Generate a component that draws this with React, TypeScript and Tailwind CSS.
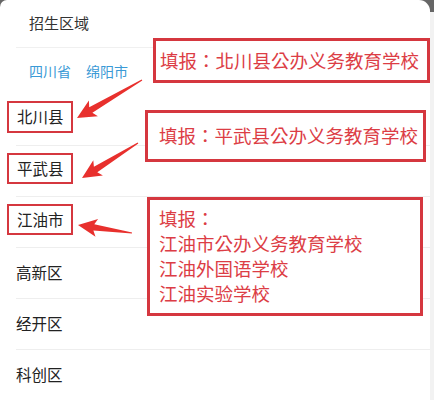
import React from "react";

const font = { fontFamily: '"Noto Sans CJK SC", "Noto Sans", sans-serif' };
const noteFont = { fontFamily: '"Noto Sans CJK TC", "Noto Sans CJK SC", sans-serif' };

type Pt = [number, number];

// tapered annotation arrow: thin at tail, wide head at tip
function arrowPoints(tail: Pt, tip: Pt) {
    const dx = tip[0] - tail[0];
    const dy = tip[1] - tail[1];
    const len = Math.hypot(dx, dy);
    const ux = dx / len;
    const uy = dy / len;
    const nx = -uy;
    const ny = ux;
    const headLen = 19;
    const headHalf = 9;
    const neckHalf = 3.2;
    const bx = tip[0] - ux * headLen;
    const by = tip[1] - uy * headLen;
    const pts: Pt[] = [
        [tail[0] + nx * 0.6, tail[1] + ny * 0.6],
        [bx + ux * 3 + nx * neckHalf, by + uy * 3 + ny * neckHalf],
        [bx + nx * headHalf, by + ny * headHalf],
        tip,
        [bx - nx * headHalf, by - ny * headHalf],
        [bx + ux * 3 - nx * neckHalf, by + uy * 3 - ny * neckHalf],
        [tail[0] - nx * 0.6, tail[1] - ny * 0.6],
    ];
    return pts.map((p) => `${p[0].toFixed(1)},${p[1].toFixed(1)}`).join(" ");
}

const rows = [
    { name: "北川县", marked: true },
    { name: "平武县", marked: true },
    { name: "江油市", marked: true },
    { name: "高新区", marked: false },
    { name: "经开区", marked: false },
    { name: "科创区", marked: false },
];

export default function App() {
    return (
        <div
            className="relative w-[434px] h-[400px] overflow-hidden bg-[linear-gradient(#666_0px,#666_12px,#f2f2f2_12px)]"
            style={font}
        >
            <div className="w-[430px] h-full bg-white rounded-tl-[7px] rounded-tr-[11px]">
                <div className="pl-[29px]">
                    <div className="h-[47px] flex items-center text-[15px] text-[#333]">招生区域</div>
                    <div className="-ml-[13px] border-t border-[#f0f0f0]" />
                    <div className="h-[46px] flex items-center gap-[15px] text-[14px] text-[#3a9ad6]">
                        <span>四川省</span>
                        <span>绵阳市</span>
                    </div>
                </div>
                <div className="pl-[16px]">
                    {rows.map((r, i) => (
                        <div
                            key={r.name}
                            className={`h-[51px] flex items-center text-[15.5px] text-[#222] ${i > 0 ? "border-t border-[#eeeeee]" : ""}`}
                        >
                            {r.marked ? (
                                <span className="-ml-[9px] -mt-[5px] border-2 border-[#d5373f] pl-[8px] pr-[7px] py-[2px]">
                                    {r.name}
                                </span>
                            ) : (
                                r.name
                            )}
                        </div>
                    ))}
                </div>
            </div>

            {/* annotation boxes laid over the list */}
            <div
                className="absolute left-[153px] top-[38px] w-[277px] h-[45px] border-[3px] border-[#d5373f] bg-white flex items-center pl-[4px] text-[18.5px] text-[#dc3d45] whitespace-nowrap"
                style={noteFont}
            >
                填报：北川县公办义务教育学校
            </div>
            <div
                className="absolute left-[145px] top-[110px] w-[281px] h-[52px] border-[3px] border-[#d5373f] bg-white flex items-center pl-[11px] text-[18.5px] text-[#dc3d45] whitespace-nowrap"
                style={noteFont}
            >
                填报：平武县公办义务教育学校
            </div>
            <div
                className="absolute left-[147px] top-[197px] w-[276px] h-[119px] border-[3px] border-[#d5373f] bg-white pl-[9px] pt-[6px] text-[18.5px] leading-[25px] text-[#dc3d45] whitespace-nowrap"
                style={noteFont}
            >
                <div>填报：</div>
                <div>江油市公办义务教育学校</div>
                <div>江油外国语学校</div>
                <div>江油实验学校</div>
            </div>

            <svg className="absolute inset-0 pointer-events-none" width="434" height="400">
                <polygon points={arrowPoints([142, 80], [77, 118])} fill="#e8302d" />
                <polygon points={arrowPoints([138, 143], [82, 178])} fill="#e8302d" />
                <polygon points={arrowPoints([132, 233], [78, 225])} fill="#e8302d" />
            </svg>
        </div>
    );
}
